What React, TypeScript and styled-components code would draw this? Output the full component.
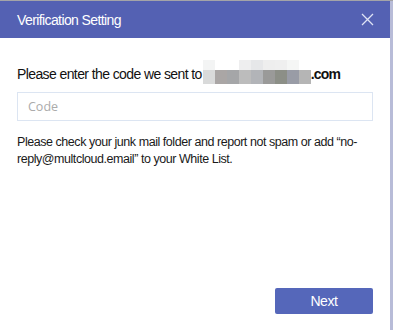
import React, { useState } from "react";
import styled, { createGlobalStyle } from "styled-components";

const GlobalStyle = createGlobalStyle`
  html, body {
    margin: 0;
    padding: 0;
    background: #b8bcd8;
  }
  body {
    font-family: "Liberation Sans", Arial, sans-serif;
  }
`;

const Page = styled.div`
  width: 393px;
  height: 330px;
  display: flex;
  border-top: 1px solid #a4a4a8;
  box-sizing: border-box;
`;

const Dialog = styled.div`
  width: 390px;
  height: 329px;
  background: #ffffff;
  display: flex;
  flex-direction: column;
`;

const Header = styled.div`
  height: 37px;
  background: #5461b3;
  display: flex;
  align-items: center;
  justify-content: space-between;
  padding: 0 16px 0 17px;
  flex-shrink: 0;
`;

const Title = styled.h2`
  margin: 0;
  font-size: 14px;
  font-weight: normal;
  letter-spacing: -0.6px;
  color: #ffffff;
`;

const CloseButton = styled.button`
  border: none;
  background: none;
  padding: 0;
  width: 14px;
  height: 14px;
  display: flex;
  align-items: center;
  justify-content: center;
  cursor: pointer;
`;

const Body = styled.div`
  flex: 1;
  display: flex;
  flex-direction: column;
  padding: 26px 17px 16px 17px;
`;

const Prompt = styled.p`
  margin: 0;
  font-size: 14px;
  letter-spacing: -0.6px;
  color: #111111;
  display: flex;
  align-items: center;
  height: 20px;
`;

const Masked = styled.span`
  display: inline-grid;
  grid-template-columns: repeat(9, 12px);
  grid-template-rows: 10px 14px;
  margin: 0 0 0 1px;
  transform: translateY(-2px);
`;

const Domain = styled.span`
  font-weight: bold;
  letter-spacing: -0.8px;
`;

const Pixel = styled.span<{ $c: string }>`
  background: ${(p) => p.$c};
`;

const CodeInput = styled.input`
  margin-top: 8px;
  height: 29px;
  box-sizing: border-box;
  border: 1px solid #dce5f2;
  padding: 0 10px;
  font-family: "Open Sans", sans-serif;
  font-size: 12.5px;
  color: #333;
  outline: none;
  &::placeholder {
    color: #ababab;
  }
`;

const Note = styled.p`
  margin: 13px 0 0;
  font-size: 12.5px;
  line-height: 17px;
  letter-spacing: -0.45px;
  color: #1a1a1a;
`;

const Footer = styled.div`
  margin-top: auto;
  display: flex;
  justify-content: flex-end;
`;

const NextButton = styled.button`
  width: 98px;
  height: 26px;
  border: none;
  border-radius: 2px;
  background: #5567ba;
  color: #ffffff;
  font-family: "Liberation Sans", Arial, sans-serif;
  font-size: 14px;
  letter-spacing: -0.4px;
  cursor: pointer;
`;

const maskTop = ["#f3f4f4", "#ffffff", "#ffffff", "#eeeeef", "#e6e7e9", "#eeeeee", "#efefef", "#f5f6f5", "#ffffff"];
const maskBottom = ["#d9dada", "#aaa6a5", "#a5a6a8", "#bcbcbc", "#b2b4b8", "#9a9a99", "#8c8f87", "#999ca6", "#b5b5b5"];

export default function App() {
  const [code, setCode] = useState("");
  return (
    <>
      <GlobalStyle />
      <Page>
        <Dialog>
          <Header>
            <Title>Verification Setting</Title>
            <CloseButton aria-label="close">
              <svg width="13" height="13" viewBox="0 0 13 13">
                <path d="M1 1L12 12M12 1L1 12" stroke="#dfe3f5" strokeWidth="1.3" />
              </svg>
            </CloseButton>
          </Header>
          <Body>
            <Prompt>
              Please enter the code we sent to
              <Masked>
                {maskTop.map((c, i) => (
                  <Pixel key={"t" + i} $c={c} />
                ))}
                {maskBottom.map((c, i) => (
                  <Pixel key={"b" + i} $c={c} />
                ))}
              </Masked>
              <Domain>.com</Domain>
            </Prompt>
            <CodeInput placeholder="Code" value={code} onChange={(e) => setCode(e.target.value)} />
            <Note>
              Please check your junk mail folder and report not spam or add “no-reply@multcloud.email” to your White List.
            </Note>
            <Footer>
              <NextButton>Next</NextButton>
            </Footer>
          </Body>
        </Dialog>
      </Page>
    </>
  );
}
